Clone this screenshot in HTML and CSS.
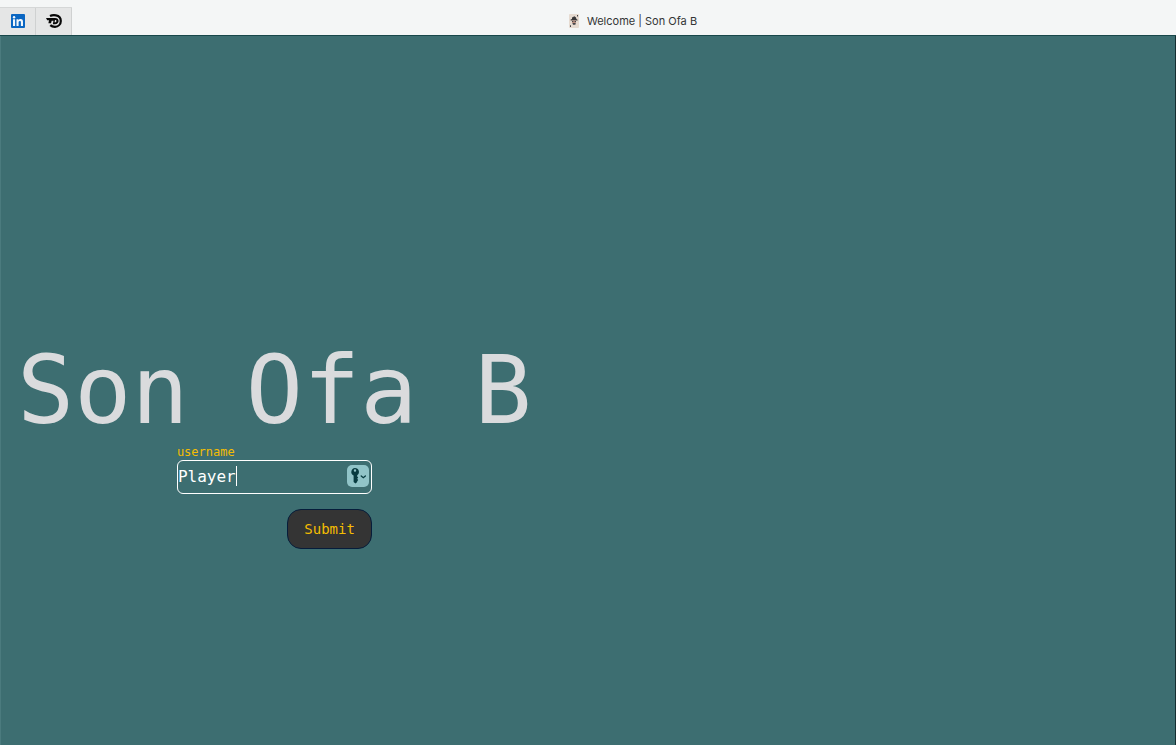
FILE: index.html
```html
<!DOCTYPE html>
<html lang="en">
<head>
<meta charset="utf-8">
<title>Welcome | Son Ofa B</title>
<link rel="stylesheet" href="styles.css">
</head>
<body>
<header class="tabbar">
  <nav class="pins" aria-label="Pinned tabs">
    <button class="pin" type="button" aria-label="LinkedIn">
      <svg width="14" height="14" viewBox="0 0 14 14" aria-hidden="true">
        <rect width="14" height="14" rx="1" fill="#0a66c2"/>
        <path fill="#f2f7fc" d="M2 5.300h2.100V12H2zM5.500 5.300h2v.9c.4-.7 1.200-1.100 2.100-1.100 1.900 0 2.400 1.200 2.400 3V12H9.900V8.500c0-.9-.1-1.600-1.100-1.600S7.600 7.700 7.600 8.500V12H5.500z"/>
        <circle cx="3.050" cy="3.200" r="1.200" fill="#f2f7fc"/>
      </svg>
    </button>
    <button class="pin" type="button" aria-label="D">
      <svg width="16" height="14" viewBox="0 0 16 14" aria-hidden="true">
        <path fill="none" stroke="#080808" stroke-width="2.200" d="M4 2C6 1 8 1 10 1.300c2.900.5 4.800 2.800 4.800 5.600 0 3.200-2.500 5.800-5.800 5.900-2 0-3.600-.6-4.700-1.700"/>
        <path fill="#080808" d="M0 4h9c2.300 0 3.600 1.200 3.600 3S11.200 10.300 9 10.300H6.800l.7-3.500H5.700L5 9.300H2.400L3 6.200H1.200z"/>
        <path fill="#e5e6e6" d="M9 6h.4c.8 0 1 .4 1 1 0 .8-.5 1.300-1.300 1.300h-.6z"/>
      </svg>
    </button>
  </nav>
  <div class="tab">
    <svg width="10" height="14" viewBox="0 0 10 14" aria-hidden="true">
      <rect width="10" height="14" rx="1" fill="#e6dbd1"/>
      <path fill="#38383a" d="M3 3.500L5.500 2.300 7 3.500l.4 1.400 1.200.8v.8H1.600V5.500L3 5z"/>
      <path fill="#b98f80" d="M3 6.500h4v2.300L5 10 3 8.800z"/>
      <path fill="#454448" d="M3 7h1.300v1H3zM5.700 7H7v1H5.700zM3.400 9h3.300l-.3 1.800H4zM8 1h1v1.600H8zM1 11.300h1V13H1z"/>
    </svg>
    <span>Welcome | Son Ofa B</span>
  </div>
</header>
<main class="page">
  <section class="welcome">
    <h1 class="title">Son Ofa B</h1>
    <form class="login">
      <label class="label" for="username">username</label>
      <div class="field">
        <input class="input" id="username" type="text" value="Player" autocomplete="off">
        <span class="caret"></span>
        <button class="key" type="button" aria-label="Fill from passwords">
          <svg width="22" height="22" viewBox="0 0 22 22" aria-hidden="true">
            <path fill="#083b40" fill-rule="evenodd" d="M8 3a4 4 0 0 1 2.200 7.300v1.300l1 1-1 1.200 1 1.200-1 1.200V17L8.500 18.500 6.600 17v-6.400A4 4 0 0 1 8 3zm0 1.300a1.200 1.200 0 1 0 0 2.400 1.200 1.200 0 0 0 0-2.400z"/>
            <path fill="none" stroke="#083b40" stroke-width="1.300" stroke-linecap="round" d="M14.200 11l2.100 1.700L18.400 11"/>
          </svg>
        </button>
      </div>
      <button class="submit" type="submit">Submit</button>
    </form>
  </section>
</main>
</body>
</html>
```
FILE: styles.css
```css
* {
  box-sizing: border-box;
}

body {
  margin: 0;
  min-height: 100vh;
  display: flex;
  flex-direction: column;
  background: #3d6e71;
  font-family: "DejaVu Sans Mono", monospace;
}

.tabbar {
  display: flex;
  align-items: stretch;
  height: 36px;
  padding-top: 7px;
  background: #f4f6f6;
  border-bottom: 1px solid #18474a;
}

.pins {
  display: flex;
  background: #e5e6e6;
  border-top: 1px solid #d5d7d7;
}

.pin {
  display: flex;
  align-items: center;
  justify-content: center;
  width: 36px;
  padding: 0 0 2px;
  border: 0;
  border-right: 1px solid #cfd1d1;
  background: none;
}

.tab {
  flex: 1;
  display: flex;
  align-items: center;
  justify-content: center;
  gap: 8px;
  padding-left: 18px;
  color: #333535;
  font: 11px/16px Inter, sans-serif;
}

.page {
  flex: 1;
  padding: 298px 16px 16px;
  border-right: 1px solid #152f32;
  border-left: 1px solid #4b7b7e;
}

.welcome {
  display: flex;
  flex-direction: column;
  align-items: center;
  width: fit-content;
}

.title {
  margin: 0;
  color: #dadbdd;
  font-size: 95px;
  font-weight: 400;
  line-height: 112px;
  white-space: nowrap;
}

.login {
  display: flex;
  flex-direction: column;
  width: 195px;
}

.label {
  padding-bottom: 1px;
  color: #f5bd02;
  font-size: 12px;
  line-height: 13px;
}

.field {
  position: relative;
  font-size: 16px;
}

.input {
  display: block;
  width: 100%;
  height: 34px;
  padding: 0 0 2px;
  border: 1px solid #fff;
  border-radius: 6px;
  outline: 0;
  background: transparent;
  color: #fff;
  font: inherit;
}

.caret {
  position: absolute;
  top: 6px;
  left: calc(6ch + 1px);
  width: 1px;
  height: 20px;
  background: #fff;
}

.key {
  position: absolute;
  top: 5px;
  right: 3px;
  display: flex;
  padding: 0;
  border: 0;
  border-radius: 5px;
  background: #91c4c8;
}

.submit {
  align-self: flex-end;
  height: 40px;
  margin-top: 15px;
  padding: 0 16px;
  border: 1px solid #061d3b;
  border-radius: 14px;
  background: #343434;
  color: #f5bd02;
  font: 14px/20px "DejaVu Sans Mono", monospace;
}
```
